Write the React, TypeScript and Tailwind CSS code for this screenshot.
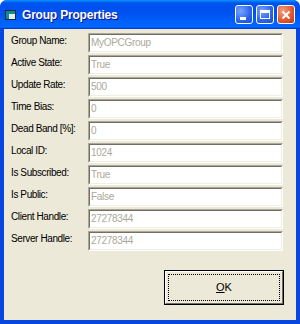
import React from "react";

const rows = [
    { label: "Group Name:", value: "MyOPCGroup" },
    { label: "Active State:", value: "True" },
    { label: "Update Rate:", value: "500" },
    { label: "Time Bias:", value: "0" },
    { label: "Dead Band [%]:", value: "0" },
    { label: "Local ID:", value: "1024" },
    { label: "Is Subscribed:", value: "True" },
    { label: "Is Public:", value: "False" },
    { label: "Client Handle:", value: "27278344" },
    { label: "Server Handle:", value: "27278344" },
];

function TitleIcon() {
    return (
        <svg width="11" height="10" viewBox="0 0 11 10" className="shrink-0">
            <rect x="0.5" y="0.5" width="10" height="9" fill="#ffffff" stroke="#1a2a3a" />
            <rect x="1" y="1" width="9" height="3" fill="#108c94" />
            <rect x="1" y="1" width="3" height="8" fill="#108c94" />
            <rect x="4" y="4" width="6" height="5" fill="#dfeff0" />
        </svg>
    );
}

function CaptionButton({ kind }: { kind: "min" | "max" | "close" }) {
    const isClose = kind === "close";
    return (
        <div
            className={
                "w-[18px] h-[19px] rounded-[3px] border border-white flex items-center justify-center " +
                (isClose
                    ? "bg-[radial-gradient(circle_at_30%_30%,#f2a080,#e0552c_60%,#c2381a)]"
                    : "bg-[radial-gradient(circle_at_30%_30%,#7aa5ff,#2a63e8_60%,#1c4fd0)]")
            }
        >
            {kind === "min" && <div className="w-[6px] h-[3px] bg-white mt-[8px] -ml-[3px]" />}
            {kind === "max" && <div className="w-[10px] h-[9px] border border-white border-t-[3px]" />}
            {kind === "close" && (
                <svg width="10" height="10" viewBox="0 0 10 10">
                    <path d="M1.5 1.5 L8.5 8.5 M8.5 1.5 L1.5 8.5" stroke="#ffffff" strokeWidth="2" />
                </svg>
            )}
        </div>
    );
}

function ReadOnlyBox({ value }: { value: string }) {
    return (
        <div className="w-[195px] h-[20px] border-t border-l border-t-[#aca899] border-l-[#aca899] border-b border-r border-b-white border-r-white">
            <div className="h-full border-t border-l border-t-[#716f64] border-l-[#716f64] border-b border-r border-b-[#f1efe2] border-r-[#f1efe2] bg-white pl-[1px] pt-[2px] text-[10px] leading-[12px] tracking-[-0.3px] text-[#aca899]">
                {value}
            </div>
        </div>
    );
}

export default function App() {
    return (
        <div className="w-[300px] h-[324px] bg-white font-['Liberation_Sans',Arial,sans-serif]">
            <div className="w-full h-full flex flex-col rounded-t-[7px] overflow-hidden bg-[#0846e0]">
                <div className="h-[29px] shrink-0 flex items-center pl-[5px] pr-[5px] bg-[linear-gradient(180deg,#0997ff_0%,#0053ee_10%,#0050ee_40%,#0066ff_88%,#066aff_93%,#005bff_95%,#003dd7_97%,#003dd7_100%)]">
                    <TitleIcon />
                    <span className="ml-[6px] text-[12px] font-bold text-white tracking-[-0.2px] [text-shadow:1px_1px_#0f1089]">
                        Group Properties
                    </span>
                    <div className="ml-auto flex gap-[3px]">
                        <CaptionButton kind="min" />
                        <CaptionButton kind="max" />
                        <CaptionButton kind="close" />
                    </div>
                </div>

                <div className="flex-1 mx-[4px] mb-[4px] bg-[#ece9d8] flex flex-col pt-[4px]">
                    <div className="flex flex-col gap-[2px]">
                        {rows.map((row) => (
                            <div key={row.label} className="flex items-start h-[20px]">
                                <span className="w-[84px] pl-[7px] pt-[2px] text-[10px] leading-[12px] tracking-[-0.4px] text-black">
                                    {row.label}
                                </span>
                                <ReadOnlyBox value={row.value} />
                            </div>
                        ))}
                    </div>

                    <div className="flex justify-end pr-[12px] mt-[19px]">
                        <div className="w-[120px] h-[35px] border border-black">
                            <div className="h-full border-t border-l border-white border-b border-r border-b-[#716f64] border-r-[#716f64] p-[2px]">
                                <div className="h-full border border-dotted border-black flex items-center justify-center text-[11px] text-black">
                                    <span>
                                        <span className="underline">O</span>K
                                    </span>
                                </div>
                            </div>
                        </div>
                    </div>
                </div>
            </div>
        </div>
    );
}
